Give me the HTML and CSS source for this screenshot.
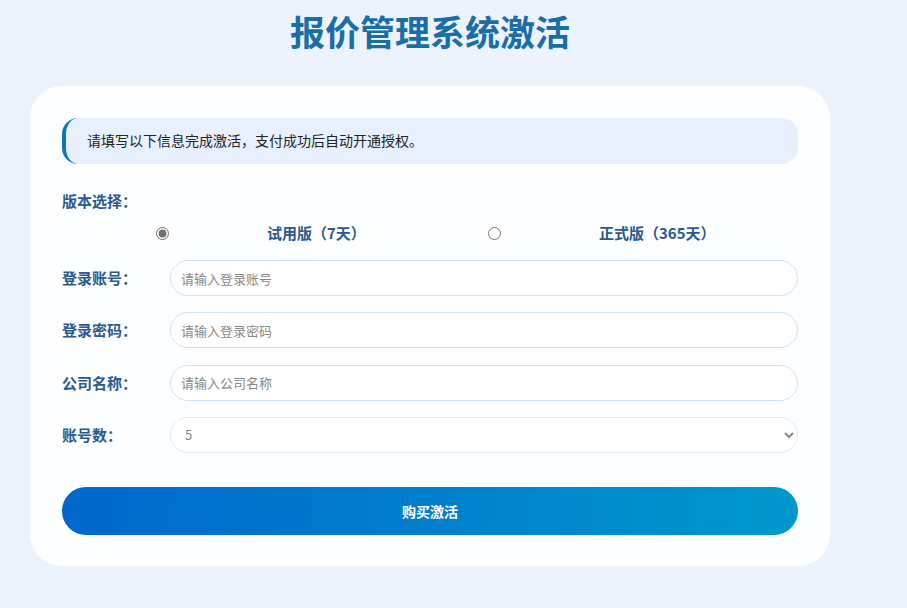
FILE: index.html
```html
<!DOCTYPE html>
<html lang="zh-CN">

<head>
    <meta charset="UTF-8">
    <title>报价管理系统激活</title>
    <link rel="stylesheet" href="styles.css">
</head>

<body>
    <div class="wrapper">
        <h1 class="title">报价管理系统激活</h1>

        <form class="card">
            <div class="notice">请填写以下信息完成激活，支付成功后自动开通授权。</div>

            <div class="version">
                <div class="label">版本选择：</div>
                <div class="radio-group">
                    <label class="radio">
                        <input type="radio" name="version" value="trial" checked>
                        <span>试用版（7天）</span>
                    </label>
                    <label class="radio">
                        <input type="radio" name="version" value="full">
                        <span>正式版（365天）</span>
                    </label>
                </div>
            </div>

            <div class="form-row">
                <label class="label" for="account">登录账号：</label>
                <input class="field" id="account" type="text" placeholder="请输入登录账号">
            </div>
            <div class="form-row">
                <label class="label" for="password">登录密码：</label>
                <input class="field" id="password" type="password" placeholder="请输入登录密码">
            </div>
            <div class="form-row">
                <label class="label" for="company">公司名称：</label>
                <input class="field" id="company" type="text" placeholder="请输入公司名称">
            </div>
            <div class="form-row">
                <label class="label" for="count">账号数：</label>
                <select class="field select" id="count">
                    <option value="5" selected>5</option>
                    <option value="10">10</option>
                    <option value="20">20</option>
                    <option value="50">50</option>
                </select>
            </div>

            <button class="btn" type="button">购买激活</button>
        </form>
    </div>
</body>

</html>
```

FILE: styles.css
```css
* {
    margin: 0;
    padding: 0;
    box-sizing: border-box;
}

body {
    min-height: 100vh;
    background: #ecf3fd;
    font-family: "Noto Sans CJK SC", "Noto Sans", sans-serif;
    color: #222;
}

.wrapper {
    width: 800px;
    margin-left: 30px;
    padding-top: 6px;
}

.title {
    text-align: center;
    font-size: 35px;
    line-height: 50px;
    font-weight: 700;
    color: #1a6ea6;
    margin-bottom: 30px;
}

.card {
    background: #fdfeff;
    border-radius: 32px;
    padding: 32px 32px 31px;
}

.notice {
    background: #e8f0fd;
    border-left: 4px solid #0a78bd;
    border-radius: 16px;
    padding: 12px 21px 13px;
    font-size: 14px;
    line-height: 21px;
    color: #222;
}

.label {
    font-size: 15px;
    font-weight: 700;
    color: #2a5a8b;
    line-height: 22px;
}

.version {
    margin-top: 26px;
}

.radio-group {
    display: flex;
    margin: 10px 0 0 94px;
}

.radio {
    display: flex;
    align-items: center;
    flex-shrink: 0;
    width: 332px;
    cursor: pointer;
}

.radio input {
    width: 13px;
    height: 13px;
    margin: 0;
    accent-color: #707070;
}

.radio span {
    margin-left: 98px;
    font-size: 15px;
    font-weight: 700;
    color: #2a5a8b;
    line-height: 22px;
}

.form-row {
    display: flex;
    align-items: center;
    margin-top: 16.33px;
}

.version + .form-row {
    margin-top: 16px;
}

.form-row .label {
    width: 108px;
    flex-shrink: 0;
}

.field {
    flex: 1;
    height: 36px;
    border: 1px solid #cfe3f8;
    border-radius: 18px;
    padding: 0 10px;
    font-family: inherit;
    font-size: 13px;
    color: #777;
    background: #fff;
    outline: none;
}

.field::placeholder {
    color: #888;
}

.select {
    padding-left: 10px;
    border-color: #dcebfb;
    color: #888;
}

.btn {
    display: block;
    width: 100%;
    height: 48px;
    margin-top: 34px;
    border: none;
    border-radius: 24px;
    background: linear-gradient(100deg, #0066cc 0%, #0099cc 100%);
    color: #fff;
    font-family: inherit;
    font-size: 14px;
    font-weight: 700;
    cursor: pointer;
}
```
